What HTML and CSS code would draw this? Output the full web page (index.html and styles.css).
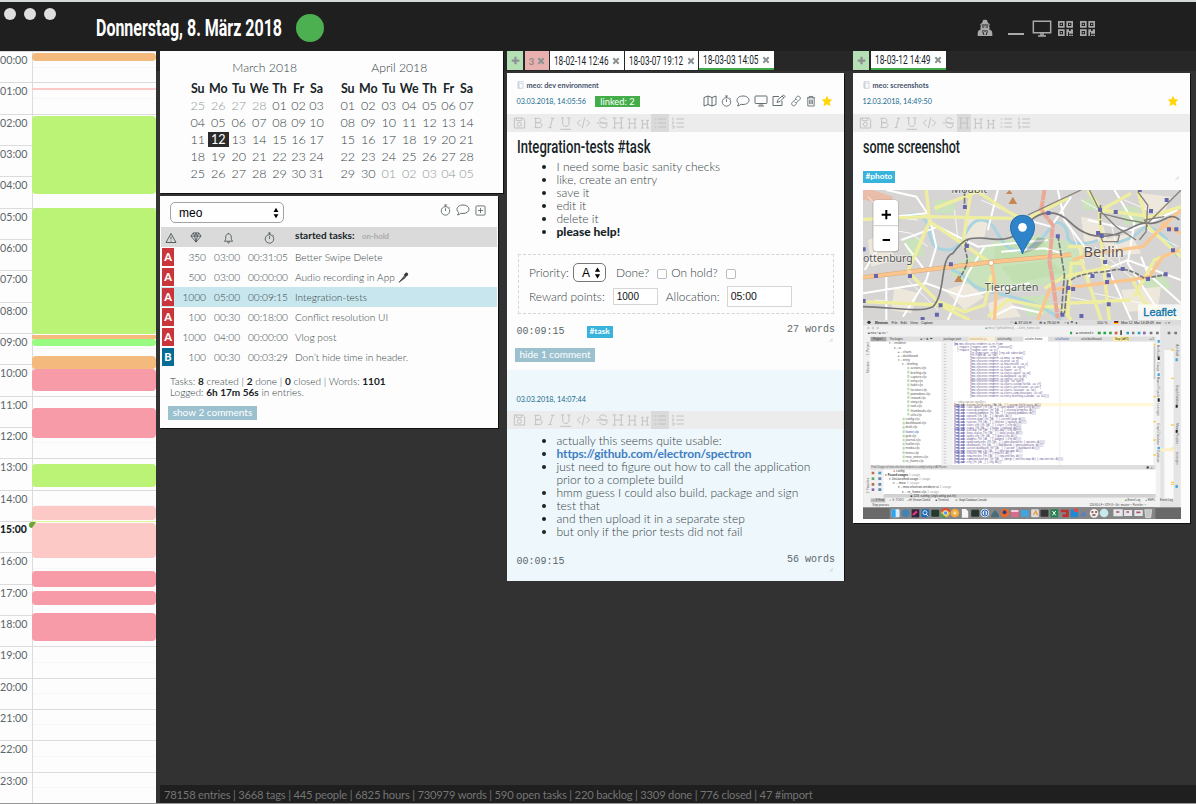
FILE: index.html
```html
<!DOCTYPE html>
<html lang="de">
<head>
<meta charset="utf-8">
<title>meo</title>
<link rel="stylesheet" href="styles.css">
</head>
<body>
<svg class="defs" width="0" height="0">
  <symbol id="stopwatch" viewBox="0 0 24 26"><circle cx="12" cy="15" r="9.3"/><path d="M12 15V9M9 2h6M12 2v4M19 6l2 2"/></symbol>
  <symbol id="comment" viewBox="0 0 28 24"><path d="M14 2c7 0 12 3.800 12 8.500S21 19 14 19c-1.500 0-3-.2-4.300-.5C8 20.500 5.500 21.600 3 22c1.500-1.600 2.200-3.400 2.200-5.200C3.200 15.200 2 13 2 10.500 2 5.800 7 2 14 2z"/></symbol>
  <symbol id="plusbox" viewBox="0 0 24 24"><rect x="2" y="2" width="20" height="20" rx="2"/><path d="M12 6.500v11M6.500 12h11"/></symbol>
  <symbol id="map" viewBox="0 0 28 24"><path d="M2 5l8-3 8 3 8-3v17l-8 3-8-3-8 3zM10 2v17M18 5v17"/></symbol>
  <symbol id="monitor" viewBox="0 0 28 24"><rect x="2" y="2" width="24" height="15" rx="1.500"/><path d="M12 17v4M16 17v4M8 22h12"/></symbol>
  <symbol id="edit" viewBox="0 0 28 26"><path d="M20 14v9H2V5h12M10 17l2-6L23 2l3 3-10 10zM20 4l4 4"/></symbol>
  <symbol id="link" viewBox="0 0 26 26"><path d="M11 8l4-4c2-2 4-2 6 0s2 4 0 6l-5 5c-2 2-4 2-6 0M15 18l-4 4c-2 2-4 2-6 0s-2-4 0-6l5-5c2-2 4-2 6 0"/></symbol>
  <symbol id="trash" viewBox="0 0 22 26"><path d="M2 6h18M7 6V3h8v3M4 6v18h14V6M8 10v10M11 10v10M14 10v10"/></symbol>
  <symbol id="star" viewBox="0 0 24 24"><path d="M12 1l3.300 7.300 7.700.9-5.700 5.300 1.600 8L12 18.600 5.100 22.500l1.600-8L1 9.200l7.700-.9z"/></symbol>
  <symbol id="book" viewBox="0 0 18 22"><path d="M2 2h14v18H2zM5 2v18M8 7h5M2 7h2M2 12h2M2 16h2"/></symbol>
  <symbol id="cross" viewBox="0 0 20 20"><path d="M5 1.500L10 6.500l5-5L18.500 5l-5 5 5 5-3.500 3.500-5-5-5 5L1.500 15l5-5-5-5z"/></symbol>
  <symbol id="plus" viewBox="0 0 20 20"><path d="M7.500 1.500h5v6h6v5h-6v6h-5v-6h-6v-5h6z"/></symbol>
  <symbol id="grip" viewBox="0 0 12 12"><path d="M1 11L11 1M7 11l4-4"/></symbol>
  <symbol id="updown" viewBox="0 0 16 30"><path d="M8 1l6.500 11h-13zM8 29L1.500 18h13z"/></symbol>
  <symbol id="qr" viewBox="0 0 45 45"><path fill-rule="evenodd" d="M0 0h20v20H0zM5 5v10h10V5zM25 0h20v20H25zM30 5v10h10V5zM0 25h20v20H0zM5 30v10h10V30zM8 8h4v4H8zM33 8h4v4h-4zM8 33h4v4H8zM25 25h8v5h5v-5h7v13h-12v-4h-3v11h-5zM33 41h5v4h-5zM40 41h5v4h-5z"/></symbol>
  <symbol id="toolbar" viewBox="0 0 540 54">
    <g fill="none" stroke="#c2c2c2" stroke-width="3">
      <path d="M22 12h26l5 5v25H22zM28 12v8h16v-8"/><circle cx="37" cy="31" r="6"/>
      <path d="M82 13h13c9 0 9 13 0 13h-9 10c12 0 12 15 0 15H82M86 13v28M132 13h10M124 41h10M137 13l-8 28M162 12h9M181 12h9M167 12v15c0 14 19 14 19 0V12M160 46h32"/>
      <path d="M221 17l-10 10 10 10M238 17l10 10-10 10M233 11l-7 32M298 18c-3-9-20-8-20 1 0 10 22 6 22 15 0 10-20 10-22-1M269 27h34M317 12h11M337 12h12M317 42h11M337 42h12M323 12v30M343 12v30M323 27h20M362 15h9M379 15h10M362 42h9M379 42h10M367 15v27M384 15v27M367 28h17M402 19h8M417 19h9M402 42h8M417 42h9M406 19v23M421 19v23M406 30h15"/>
      <path d="M454 15h23M454 27h23M454 39h23M443 15h5M443 27h5M443 39h5M508 15h23M508 27h23M508 39h23M498 11v9M495 25h6l-6 7M496 36h5v6h-5"/>
    </g>
  </symbol>
</svg>

<div class="window">
  <header class="titlebar">
    <div class="lights"><i></i><i></i><i></i></div>
    <svg class="title" width="189" height="36"><text class="cond" x="1" y="24" font-size="23.500" font-weight="700" textLength="186" lengthAdjust="spacingAndGlyphs">Donnerstag, 8. März 2018</text></svg>
    <div class="status"></div>
    <div class="tools">
      <svg class="spy" width="16" height="18" viewBox="0 0 48 54"><path fill="#a9a9a9" d="M10 15l5-3 3-8c1-3 4-2 6-1 2-1 5-2 6 1l3 8 5 3v4l-2 1 2 7-2 4c7 2 10 6 10 13v7H2v-7c0-7 3-11 10-13l-2-4 2-7-2-1z"/><path fill="none" stroke="#1f1f1f" stroke-width="3" d="M14 18h20M15 24h7M26 24h7M19 33l-2 5 4 10M29 33l2 5-4 10M24 33v6"/></svg>
      <div class="minus"></div>
      <svg class="screen" width="20" height="18" viewBox="0 0 60 54"><path fill="none" stroke="#a9a9a9" stroke-width="4.500" d="M4 4h52v34H4zM18 48h24M27 39v8h6v-8"/></svg>
      <svg class="qr" width="15" height="15"><use href="#qr"/></svg>
      <svg class="qr" width="15" height="15"><use href="#qr"/></svg>
    </div>
  </header>

  <div class="main">
    <aside class="day">
      <div class="hours">
        <div><b>00:00</b><i></i></div><div><b>01:00</b><i></i></div><div><b>02:00</b><i></i></div><div><b>03:00</b><i></i></div><div><b>04:00</b><i></i></div><div><b>05:00</b><i></i></div><div><b>06:00</b><i></i></div><div><b>07:00</b><i></i></div><div><b>08:00</b><i></i></div><div><b>09:00</b><i></i></div><div><b>10:00</b><i></i></div><div><b>11:00</b><i></i></div><div><b>12:00</b><i></i></div><div><b>13:00</b><i></i></div><div><b>14:00</b><i></i></div><div class="now"><b>15:00</b><i></i></div><div><b>16:00</b><i></i></div><div><b>17:00</b><i></i></div><div><b>18:00</b><i></i></div><div><b>19:00</b><i></i></div><div><b>20:00</b><i></i></div><div><b>21:00</b><i></i></div><div><b>22:00</b><i></i></div><div><b>23:00</b><i></i></div>
      </div>
      <div class="events">
        <span class="orange" style="top:2px;height:8px"></span>
        <span class="rose thin" style="top:37px;height:2px"></span>
        <span class="lime" style="top:65px;height:78px"></span>
        <span class="lime" style="top:157px;height:125.500px"></span>
        <span class="orange thin" style="top:284px;height:4px"></span>
        <span class="mint" style="top:288px;height:7px"></span>
        <span class="orange" style="top:305px;height:13px"></span>
        <span class="pink" style="top:318px;height:22px"></span>
        <span class="pink" style="top:357px;height:30px"></span>
        <span class="lime" style="top:413px;height:23px"></span>
        <span class="rose" style="top:454.500px;height:14.500px"></span>
        <span class="yellow thin" style="top:469.500px;height:1.500px"></span>
        <span class="rose" style="top:472px;height:35px"></span>
        <span class="pink" style="top:520px;height:16px"></span>
        <span class="pink" style="top:540px;height:14px"></span>
        <span class="pink" style="top:562px;height:28px"></span>
      </div>
      <svg class="nowmark" width="8" height="8"><path d="M7 1H3a3 3 0 0 0 0 6L5 4z" fill="#67a72c"/></svg>
    </aside>

    <section class="left">
      <div class="card months">
        <div class="month"><h4>March 2018</h4>
          <div class="grid"><b>Su</b><b>Mo</b><b>Tu</b><b>We</b><b>Th</b><b>Fr</b><b>Sa</b>
          <i>25</i><i>26</i><i>27</i><i>28</i><span>01</span><span>02</span><span>03</span>
          <span>04</span><span>05</span><span>06</span><span>07</span><span>08</span><span>09</span><span>10</span>
          <span>11</span><span class="today">12</span><span>13</span><span>14</span><span>15</span><span>16</span><span>17</span>
          <span>18</span><span>19</span><span>20</span><span>21</span><span>22</span><span>23</span><span>24</span>
          <span>25</span><span>26</span><span>27</span><span>28</span><span>29</span><span>30</span><span>31</span></div>
        </div>
        <div class="month"><h4>April 2018</h4>
          <div class="grid"><b>Su</b><b>Mo</b><b>Tu</b><b>We</b><b>Th</b><b>Fr</b><b>Sa</b>
          <span>01</span><span>02</span><span>03</span><span>04</span><span>05</span><span>06</span><span>07</span>
          <span>08</span><span>09</span><span>10</span><span>11</span><span>12</span><span>13</span><span>14</span>
          <span>15</span><span>16</span><span>17</span><span>18</span><span>19</span><span>20</span><span>21</span>
          <span>22</span><span>23</span><span>24</span><span>25</span><span>26</span><span>27</span><span>28</span>
          <span>29</span><span>30</span><i>01</i><i>02</i><i>03</i><i>04</i><i>05</i></div>
        </div>
      </div>

      <div class="card tasks">
        <div class="taskbar">
          <div class="select story"><span>meo</span><svg width="6" height="12"><use href="#updown"/></svg></div>
          <div class="line-icons">
            <svg width="11" height="12"><use href="#stopwatch"/></svg>
            <svg width="14" height="12"><use href="#comment"/></svg>
            <svg width="11" height="11"><use href="#plusbox"/></svg>
          </div>
        </div>
        <div class="row head">
          <span><svg width="12" height="12" viewBox="0 0 24 24"><path d="M12 3L22 21H2zM12 9v6M12 17v2"/></svg></span>
          <span><svg width="12" height="11" viewBox="0 0 26 24"><path d="M7 2h12l5 7-11 13L2 9zM2 9h22M7 2l3 7 3 13 3-13 3-7M10 9l3-7 3 7"/></svg></span>
          <span><svg width="11" height="12" viewBox="0 0 22 26"><path d="M2 20c3-3 3-5 3-9 0-5 3-7 6-7s6 2 6 7c0 4 0 6 3 9zM9 21c0 4 4 4 4 0M11 2v2"/></svg></span>
          <span><svg width="11" height="12"><use href="#stopwatch"/></svg></span>
          <strong>started tasks:</strong><em>on-hold</em>
        </div>
        <div class="row"><b>A</b><span>350</span><span>03:00</span><span>00:31:05</span><p>Better Swipe Delete</p></div>
        <div class="row"><b>A</b><span>500</span><span>03:00</span><span>00:00:00</span><p>Audio recording in App <svg width="11" height="11" viewBox="0 0 33 33"><path d="M3 31L18 13l4 4z" fill="#555" stroke="#333" stroke-width="2"/><path d="M17 9l6-7c5-2 9 3 7 8l-8 6z" fill="#3a3a3a"/></svg></p></div>
        <div class="row sel"><b>A</b><span>1000</span><span>05:00</span><span>00:09:15</span><p>Integration-tests</p></div>
        <div class="row"><b>A</b><span>100</span><span>00:30</span><span>00:18:00</span><p>Conflict resolution UI</p></div>
        <div class="row"><b>A</b><span>1000</span><span>04:00</span><span>00:00:00</span><p>Vlog post</p></div>
        <div class="row blue"><b>B</b><span>100</span><span>00:30</span><span>00:03:29</span><p>Don’t hide time in header.</p></div>
        <div class="stats">Tasks: <b>8</b> created | <b>2</b> done | <b>0</b> closed | Words: <b>1101</b><br>Logged: <b>6h 17m 56s</b> in entries.</div>
        <div class="pill show">show 2 comments</div>
      </div>
    </section>

    <section class="mid">
      <nav class="tabs">
        <span class="add"><svg width="9" height="9"><use href="#plus"/></svg></span>
        <span class="closeall">3<svg width="8" height="8"><use href="#cross"/></svg></span>
        <span class="tab"><svg width="55" height="18"><text class="cond" x="0" y="13" font-size="12" textLength="54.500" lengthAdjust="spacingAndGlyphs">18-02-14 12:46</text></svg><svg width="8" height="8"><use href="#cross"/></svg></span>
        <span class="tab narrow"><svg width="55" height="18"><text class="cond" x="0" y="13" font-size="12" textLength="54" lengthAdjust="spacingAndGlyphs">18-03-07 19:12</text></svg><svg width="8" height="8"><use href="#cross"/></svg></span>
        <span class="tab on"><svg width="56" height="17"><text class="cond" x="0" y="13" font-size="12" textLength="55.500" lengthAdjust="spacingAndGlyphs">18-03-03 14:05</text></svg><svg width="8" height="8"><use href="#cross"/></svg></span>
      </nav>
      <article class="card entry">
        <div class="story-name"><svg width="7" height="8"><use href="#book"/></svg>meo: dev environment</div>
        <div class="meta"><time>03.03.2018, 14:05:56</time><span class="linked">linked: 2</span>
          <div class="line-icons">
            <svg width="14" height="12"><use href="#map"/></svg>
            <svg width="11" height="12"><use href="#stopwatch"/></svg>
            <svg width="14" height="12"><use href="#comment"/></svg>
            <svg width="14" height="12"><use href="#monitor"/></svg>
            <svg width="14" height="13"><use href="#edit"/></svg>
            <svg width="12" height="12"><use href="#link"/></svg>
            <svg width="10" height="12"><use href="#trash"/></svg>
            <svg class="star" width="12" height="12"><use href="#star"/></svg>
          </div>
        </div>
        <div class="toolbar list-on"><svg width="180" height="18"><use href="#toolbar"/></svg></div>
        <h2><svg width="140" height="28"><text class="cond" x="0" y="21" font-size="18.500" font-weight="500" textLength="133.500" lengthAdjust="spacingAndGlyphs">Integration-tests #task</text></svg></h2>
        <ul class="one"><li>I need some basic sanity checks</li><li>like, create an entry</li><li>save it</li><li>edit it</li><li>delete it</li><li><b>please help!</b></li></ul>
        <div class="form">
          <div class="frow"><label>Priority:</label><div class="select prio"><span>A</span><svg width="7" height="12"><use href="#updown"/></svg></div><label class="done">Done?</label><i></i><label class="hold">On hold?</label><i></i></div>
          <div class="frow"><label>Reward points:</label><div class="input points">1000</div><label class="alloc">Allocation:</label><div class="input time">05:00</div></div>
        </div>
        <div class="foot"><code>00:09:15</code><span class="tag">#task</span><code class="words">27 words</code><svg class="grip" width="4" height="4"><use href="#grip"/></svg></div>
        <div class="pill hide">hide 1 comment</div>
        <div class="reply">
          <time>03.03.2018, 14:07:44</time>
          <div class="toolbar list-on"><svg width="180" height="18"><use href="#toolbar"/></svg></div>
          <ul class="two"><li>actually this seems quite usable:</li><li><a>https://github.com/electron/spectron</a></li><li>just need to figure out how to call the application<br>prior to a complete build</li><li>hmm guess I could also build, package and sign</li><li>test that</li><li>and then upload it in a separate step</li><li>but only if the prior tests did not fail</li></ul>
          <div class="foot"><code>00:09:15</code><code class="words">56 words</code><svg class="grip" width="4" height="4"><use href="#grip"/></svg></div>
        </div>
      </article>
    </section>

    <section class="right">
      <nav class="tabs">
        <span class="add"><svg width="9" height="9"><use href="#plus"/></svg></span>
        <span class="tab on"><svg width="56" height="17"><text class="cond" x="0" y="13" font-size="12" textLength="55.500" lengthAdjust="spacingAndGlyphs">18-03-12 14:49</text></svg><svg width="8" height="8"><use href="#cross"/></svg></span>
      </nav>
      <article class="card entry photo">
        <div class="story-name"><svg width="7" height="8"><use href="#book"/></svg>meo: screenshots</div>
        <div class="meta"><time>12.03.2018, 14:49:50</time><div class="line-icons"><svg class="star" width="12" height="12"><use href="#star"/></svg></div></div>
        <div class="toolbar h-on"><svg width="180" height="18"><use href="#toolbar"/></svg></div>
        <h2><svg width="140" height="28"><text class="cond" x="0" y="21" font-size="18.500" font-weight="500" textLength="97" lengthAdjust="spacingAndGlyphs">some screenshot</text></svg></h2>
        <div class="tagrow"><span class="tag">#photo</span><svg class="grip" width="4" height="4"><use href="#grip"/></svg></div>
        <div class="media">
        <svg class="mapview" viewBox="25 30 955 390" preserveAspectRatio="none">
          <rect x="25" y="30" width="955" height="390" fill="#d6d5d4"/>
          <g fill="#cbe3bd"><path d="M300 255l120-70 130-20 100 20 30 45-15 65-190 40-130-15-60-40zM240 60h60v40h-60zM680 60l50-10v40h-40zM800 80h50l20 50-60 5zM500 350l80-5 20 50-80 15zM150 180l50-10 10 60-50-5zM860 300l70-15 20 40-60 10z"/></g>
          <g fill="#eee7dc"><path d="M40 180l60-20 20 80-70 20zM680 110l60 10 20 60-70 10zM270 330l70-20 50 40-60 40zM740 180l90-20 30 60-90 10zM400 370l60-20 40 60-90 8zM860 40l90 10-20 50-70-10zM120 320l70 20-20 60-60-10zM330 110l70 10-10 50-60 5zM800 330l120-10-10 70-90 5z"/></g>
          <path fill="#e9bda9" d="M25 30h30l60 20-5 20-85-10z"/>
          <path fill="#b7dca6" d="M420 200l150-20 10 50-160 20zM440 260l150-20 40 40-150 30z" opacity=".5"/>
          <g fill="none" stroke="#a9d3de" stroke-width="9"><path d="M130 120c40-30 80-20 90 20s10 70 60 70 50-90 100-90 50 80 100 90 90-40 110-70 50 0 50 30 70 20 90 10M290 270c50 10 50 50 100 60 70 20 160 30 230 90M970 230c-40-80-90-100-110-80s-40 30-80 40"/></g>
          <g fill="none" stroke="#fff" stroke-width="6"><path d="M25 120l190-20M95 30l90 20 40 60 20 90-30 100-70 110M140 180l110-40 120 60 210-20M25 340l190-30 110 40 200-40M95 290v130M400 150l30-120M390 200l-50 80-60 140M610 30l20 90 60 80 60 40 80 180M700 120l130 30 140-60M700 290l120-50 160 60M480 110l110 30 60-90M780 30l60 100-20 120 110 170M150 190l60 80M440 215l130-10 70 20M860 230l20 50 100 90M30 270l50-80 20-70M415 410l60-30 90 20"/></g>
          <g fill="none" stroke="#fff" stroke-width="3" opacity=".8"><path d="M40 50l60 60 90 10M110 150l60 10 50 40M60 360l100 10M160 300l90 90M680 60l90 50M650 150l40 100M720 200l120 100M810 60l140 60M880 150l90 50M720 340l190 40M860 350l30 60M300 90l10 90M380 60l90 40M640 350l100 20M770 130l30 130"/></g>
          <g fill="none" stroke="#efeea0" stroke-width="10"><path d="M25 118l190-8 260 5M215 30l10 95-70 160M225 125l105 70 80 55M350 30l-25 160M240 85l130-50 90 60 60 30M160 275l90 90 80 30 60-20 20-90M25 365l230 10 90 45M400 410l60-50 100 20 60 0 30 40M520 115l120-60M700 30l40 60 90-50M735 90l10 150 20 180M640 200h40v50h-30l-10 160M570 325l60-35 140-30M680 240l60 180M830 290l40 80 110 50M830 360l-200 10M840 350l60-110 80-30M850 30l30 110 100 90M740 90l150 20 90-30"/></g>
          <g fill="none" stroke="#dba873" stroke-width="13"><path d="M25 292l135-16 250-30 240-22"/></g>
          <g fill="none" stroke="#fbc68d" stroke-width="10"><path d="M25 292l135-16 250-30 240-22M410 250l15 80-5 90M550 420l35-90 240-30 60-10 40-60 50-20M655 240l60-20 150-20 80-80 35-30M920 130l60 30"/></g>
          <path fill="none" stroke="#eba797" stroke-width="12" d="M570 30l-10 60 35 45-10 110 10 60 15 110" stroke-dasharray="30 2"/>
          <g fill="none" stroke="#777" stroke-width="5"><path d="M25 380c80 0 170 20 210 0 40-40 20-150 60-160 30-40 40-50 100-45 60 10 90 0 130-50 30-30 80-40 120 0s80 50 130 40 70-40 110-35 60-40 90-10"/><path d="M310 300c60-80 0-80 30-120M650 300c30-20 60-20 100-25s60-20 120 20l60-10" stroke-dasharray="14 4"/></g>
          <g fill="none" stroke="#858078" stroke-width="4"><path d="M520 105l160-75M705 30l30 60 50 50 60 40M850 35l30 40-5 80-20 25M740 100l80 20 60 10 100-100M735 160l60 5-5 20h-45zM880 140l-10-20 60-10"/></g>
          <g fill="none" stroke="#777" stroke-width="5" stroke-dasharray="18 5"><path d="M610 165l20 120-10 120M640 300l-10 100M330 30v50M738 75v60"/></g>
          <g fill="#6365ad"><path d="M325 75h12v12h-12zM331 192h12v12h-12zM283 247h12v12h-12zM160 282h12v12h-12zM58 282h12v12H58zM252 370h12v12h-12zM241 398h12v12h-12zM25 202h8v12h-8zM25 357h8v12h-8zM198 411h12v9h-12zM576 93h12v12h-12zM604 163h12v12h-12zM731 83h12v12h-12zM778 90h12v12h-12zM725 153h12v12h-12zM736 162h12v12h-12zM746 240h12v12h-12zM708 282h12v12h-12zM757 280h12v12h-12zM752 300h12v12h-12zM799 261h12v12h-12zM875 291h12v12h-12zM635 318h12v12h-12zM650 321h12v12h-12zM757 367h12v12h-12zM675 402h12v12h-12zM618 398h12v12h-12zM884 87h12v12h-12zM931 54h12v12h-12zM938 142h12v12h-12zM960 142h12v12h-12zM950 205h12v12h-12zM928 277h12v12h-12zM850 30h12v6h-12z"/></g>
          <path fill="#c98650" d="M475 50l13 22h-26zM465 30l9 12h-20zM312 286l13 20h-26z"/>
          <circle cx="410" cy="249" r="8" fill="#fff" stroke="#d9ae78" stroke-width="3"/><circle cx="164" cy="276" r="7" fill="#f7d7ae"/>
          <g class="places"><text x="290" y="39" font-size="30" textLength="108" lengthAdjust="spacingAndGlyphs">Moabit</text><text x="25" y="245" font-size="32" textLength="149" lengthAdjust="spacingAndGlyphs">ottenburg</text><text x="391" y="332" font-size="33" textLength="161" lengthAdjust="spacingAndGlyphs">Tiergarten</text><text x="687" y="231" font-size="43" textLength="121" lengthAdjust="spacingAndGlyphs">Berlin</text></g>
          <path d="M505 222l45-50 25 5-30 30z" fill="#666" opacity=".35"/>
          <path d="M504 222c-8-30-36-50-36-80 0-48 72-48 72 0 0 30-28 50-36 80z" fill="#2e83c9" stroke="#1f6ba9" stroke-width="3"/><circle cx="504" cy="142" r="13" fill="#fff"/>
          <rect x="54" y="59" width="79" height="158" rx="12" fill="#000" opacity=".25"/>
          <rect x="56" y="60" width="75" height="154" rx="10" fill="#fff"/><path d="M56 137h75" stroke="#ccc" stroke-width="3"/>
          <path d="M81 104h28M95 90v28M84 180h22" stroke="#000" stroke-width="6"/>
          <rect x="851" y="373" width="129" height="47" fill="#fff" opacity=".75"/><text class="leaflet" x="867" y="408" font-size="33" textLength="98" lengthAdjust="spacingAndGlyphs">Leaflet</text>
        </svg>
        <svg class="ide" viewBox="25 15 955 597" preserveAspectRatio="none">
          <rect x="25" y="15" width="955" height="597" fill="#ececec"/>
          <rect x="25" y="15" width="955" height="17" fill="#dcdcdc"/>
          <g class="menu" font-size="11"><circle cx="43" cy="22" r="5"/><text x="61" y="26" font-weight="700" textLength="39">Electron</text><text x="111" y="26">File</text><text x="138" y="26">Edit</text><text x="166" y="26">View</text><text x="199" y="26" textLength="36">Capture</text><text x="465" y="26">◠ ♟ 87.00 H</text><text x="555" y="26">⊕ ● 78.00 H</text><text x="628" y="26">◔  ♦   ☂  ◂</text><text x="728" y="26">100 %</text><path d="M779 18h13v3h-13z"/><path d="M779 21h13v3h-13z" fill="#d22"/><path d="M779 24h13v3h-13z" fill="#fc0"/><text x="800" y="26" textLength="98">Mon 12. Mar 14:49:49</text><text x="905" y="26">me</text><text x="932" y="26">⌕ ≡</text></g>
          <rect x="28" y="32" width="890" height="550" fill="#f1f1f1"/><rect x="918" y="32" width="60" height="550" fill="#e4e4e4"/>
          <rect x="930" y="105" width="28" height="445" fill="#fafafa"/>
          <g fill="#ccc"><circle cx="41" cy="39" r="4"/><circle cx="55" cy="39" r="4"/><circle cx="69" cy="39" r="4"/></g>
          <text x="392" y="43" font-size="9" fill="#999"><tspan fill="#4a9">■</tspan> meo [~/github/meo] - .../ui/re_frame.cljs</text>
          <g font-size="9" fill="#444"><text x="40" y="58">■ meo › ■ src ›</text><text x="665" y="58">■ unnamed ▾</text></g>
          <g stroke-width="8" fill="none"><path stroke="#27a844" d="M730 54h9M747 54h8M764 54h8M647 54h6"/><path stroke="#d35a40" d="M781 54h8"/><path stroke="#2aa0c8" d="M816 54h8M850 54h8"/><path stroke="#8a62b8" d="M866 54h8"/><path stroke="#777" d="M886 54h8M905 54h8M940 54h8M960 54h8M833 54h7"/><path stroke="#222" stroke-width="4" d="M800 46v14"/></g>
          <rect x="47" y="65" width="857" height="15" fill="#dedede"/><rect x="48" y="66" width="47" height="13" fill="#a5a5a5"/><rect x="342" y="65" width="80" height="15" fill="#f8eeda"/><rect x="507" y="65" width="74" height="15" fill="#fff"/>
          <g font-size="9" fill="#444"><text x="55" y="76">Project</text><text x="105" y="76">Packages</text><text x="195" y="76">⊕ ÷ ✱ ⊢</text><text x="267" y="76">package.json</text><text x="345" y="76" fill="#c7a258">externs/uri.js</text><text x="428" y="76">ui/ui/config</text><text x="511" y="76">ui/ui/re-frame</text><text x="602" y="76" fill="#3f65b5">ui/ui/footer</text><text x="680" y="76">ui/ui/dashboard</text><text x="885" y="76">⇥1</text></g>
          <rect x="776" y="65" width="50" height="13" fill="#ffef98"/><text x="781" y="75" font-size="9" fill="#333" textLength="42">Stop (⌘F2)</text>
          <rect x="47" y="80" width="213" height="370" fill="#fff"/><rect x="260" y="80" width="35" height="370" fill="#f2f2f2"/><rect x="295" y="80" width="602" height="370" fill="#fff"/>
          <path d="M616 80v370" stroke="#e5e5e5" stroke-width="2"/><rect x="295" y="264" width="602" height="10" fill="#fff7d8"/>
          <g class="files" font-size="9.500"><text x="104" y="88">▾ ▫ renderer</text><text x="117" y="101">▾ ▫ ui</text><text x="130" y="113">▸ ▫ charts</text><text x="130" y="126">▸ ▫ dashboard</text><text x="130" y="138">▾ ▫ entry</text><text x="143" y="151">▾ ▫ briefing</text><text x="168" y="163">actions.cljs</text><text x="168" y="176">briefing.cljs</text><text x="168" y="189">capture.cljs</text><text x="168" y="202">entry.cljs</text><text x="168" y="214">habit.cljs</text><text x="168" y="227">location.cljs</text><text x="168" y="239">pomodoro.cljs</text><text x="168" y="252">reward.cljs</text><text x="168" y="264">story.cljs</text><text x="168" y="277">task.cljs</text><text x="168" y="290">thumbnails.cljs</text><text x="168" y="302">utils.cljs</text><text x="153" y="315">config.cljs</text><text x="153" y="328">dashboard.cljs</text><text x="153" y="340">draft.cljs</text><text x="153" y="353" fill="#3653b0">footer.cljs</text><text x="153" y="366">grid.cljs</text><text x="153" y="378">journal.cljs</text><text x="153" y="391">leaflet.cljs</text><text x="153" y="403">media.cljs</text><text x="153" y="416">menu.cljs</text><text x="153" y="429">new_entries.cljs</text><text x="153" y="441">re_frame.cljs</text></g>
          <path d="M161 155v150M147 308v138" stroke="#b5dbb4" stroke-width="6" stroke-dasharray="8 4.600"/>
          <path d="M271 86v360" stroke="#ccc" stroke-width="8" stroke-dasharray="3 5.700"/>
          <g class="code" font-size="8.600">
            <text x="298" y="90"><tspan class="kw">(ns</tspan> meo.electron.renderer.ui.re-frame</text><text x="307" y="98">(:require [reagent.core :refer [reactive]]</text><text x="307" y="107">(:require [reagent.core :as rc]</text>
            <text x="346" y="116">[re-frame.core :refer [reg-sub subscribe]]</text><text x="346" y="124">[re-frame.db :as rdb]</text><text x="346" y="133">[meo.electron.renderer.ui.menu :as menu]</text><text x="346" y="142">[meo.electron.renderer.ui.grid :as g]</text><text x="346" y="151">[meo.electron.renderer.ui.new-entries :as n]</text><text x="346" y="159">[meo.electron.renderer.ui.stats :as stats]</text><text x="346" y="168">[meo.electron.renderer.ui.footer :as f]</text><text x="346" y="176">[meo.electron.renderer.ui.charts.award :as aw]</text><text x="346" y="185">[meo.electron.renderer.ui.dashboard :as db]</text><text x="346" y="194">[meo.electron.renderer.ui.config :as cfg]</text><text x="346" y="202">[meo.electron.renderer.ui.sync :as sync]</text><text x="346" y="211">[meo.electron.renderer.ui.charts.custom-fields :as cf]</text><text x="346" y="219">[meo.electron.renderer.ui.charts.correlation :as corr]</text><text x="346" y="228">[meo.electron.renderer.ui.charts.location :as loc]</text><text x="346" y="237">[meo.electron.renderer.ui.charts.time.durations :as cd]</text><text x="346" y="245">[meo.electron.renderer.ui.entry.briefing.calendar :as cal]))</text>
            <text x="298" y="263" fill="#999">;; Subscription Handlers</text>
            <text x="298" y="272"><tspan class="kw">(reg-sub</tspan> :custom-field-stats (<tspan class="kw">fn</tspan> [db _] (:custom-field-stats db)))</text><text x="298" y="280"><tspan class="kw">(reg-sub</tspan> :last-update (fn [db _] (:last-update (:query-cfg db))))</text><text x="298" y="289"><tspan class="kw">(reg-sub</tspan> :startup-progress (fn [db _] (:startup-progress db)))</text><text x="298" y="298"><tspan class="kw">(reg-sub</tspan> :running-pomodoro (fn [db _] (:running-pomodoro db)))</text><text x="298" y="306"><tspan class="kw">(reg-sub</tspan> :options (fn [db _] (:options db)))</text><text x="298" y="315"><tspan class="kw">(reg-sub</tspan> :current-page (fn [db _] (:current-page db)))</text><text x="298" y="323"><tspan class="kw">(reg-sub</tspan> :stories (fn [db _] (:stories (:options db))))</text><text x="298" y="332"><tspan class="kw">(reg-sub</tspan> :chart-cfg (fn [db _] (:chart (:cfg db))))</text><text x="298" y="341"><tspan class="kw">(reg-sub</tspan> :sagas (fn [db _] (:sagas (:options db))))</text><text x="298" y="349"><tspan class="kw">(reg-sub</tspan> :cal-day (fn [db _] (:cal-day (:cfg db))))</text><text x="298" y="358"><tspan class="kw">(reg-sub</tspan> :busy-status (fn [db _] (:busy-status db)))</text><text x="298" y="367"><tspan class="kw">(reg-sub</tspan> :query-cfg (fn [db _] (:query-cfg db)))</text><text x="298" y="375"><tspan class="kw">(reg-sub</tspan> :widgets (fn [db _] (:widgets (:cfg db))))</text><text x="298" y="384"><tspan class="kw">(reg-sub</tspan> :questionnaires (fn [db _] (:questionnaires (:options db))))</text><text x="298" y="393"><tspan class="kw">(reg-sub</tspan> :dashboards (fn [db _] (:dashboards (:questionnaires db))))</text><text x="298" y="401"><tspan class="kw">(reg-sub</tspan> :active-dashboard (fn [db _] (:active (:dashboard db))))</text><text x="298" y="410"><tspan class="kw">(reg-sub</tspan> :entries-map (fn [db _] (:entries-map db)))</text><text x="298" y="418"><tspan class="kw">(reg-sub</tspan> :results (fn [db _] (:results db)))</text><text x="298" y="427"><tspan class="kw">(reg-sub</tspan> :new-entries (fn [db _] (:new-entries db)))</text><text x="298" y="436"><tspan class="kw">(reg-sub</tspan> :combined-entries (fn [db _] (merge (:entries-map db) (:new-entries db))))</text><text x="298" y="445"><tspan class="kw">(reg-sub</tspan> :cfg (fn [db _] (:cfg db)))</text>
          </g>
          <path d="M897 88h7M897 245h8M897 320h8M897 375h8M897 420h8M950 105h9M950 190h9M950 330h9M950 400h9M950 502h9M950 508h9" stroke="#f2cf55" stroke-width="4"/><rect x="917" y="400" width="43" height="9" fill="#fbf2c7"/>
          <rect x="898" y="92" width="5" height="100" fill="#c9c9c9"/>
          <g fill="#666" font-size="9"><text transform="translate(909 90) rotate(90)">Ant Build</text><text transform="translate(909 142) rotate(90)">Gauge</text><text transform="translate(909 185) rotate(90)">Maven Projects</text><text transform="translate(909 265) rotate(90)">Leiningen</text><text transform="translate(909 325) rotate(90)">Graph Database</text><text transform="translate(909 405) rotate(90)">Database</text><text transform="translate(964 88) rotate(90)">Ant Build</text><text transform="translate(964 210) rotate(90)">Graph Database</text><text transform="translate(964 325) rotate(90)">Maven Projects</text><text transform="translate(964 410) rotate(90)">Leiningen</text><text transform="translate(44 120) rotate(-90)">1: Project</text><text transform="translate(44 175) rotate(-90)">Structure</text><text transform="translate(44 535) rotate(-90)">2: Favorites</text></g>
          <g stroke="#48a9d6" stroke-width="7"><path d="M913 75v8M913 175v8M913 395v8M967 130v9M967 510v9"/></g><path d="M913 125v10M913 250v10M967 270v8M967 345v8" stroke="#222" stroke-width="6"/>
          <rect x="47" y="450" width="857" height="14" fill="#dedede"/><text x="50" y="460" font-size="8" fill="#666" textLength="226">Find Usages of meo.electron.renderer.ui.config/config in All Places</text><text x="875" y="461" font-size="11" fill="#333">✱ ⊥</text>
          <rect x="87" y="464" width="817" height="84" fill="#fff"/><rect x="87" y="537" width="817" height="11" fill="#d1d1d1"/>
          <g stroke-width="8"><path stroke="#bc6e4b" d="M51 474h8M51 508h8"/><path stroke="#4ba2c8" d="M71 474h9"/><path stroke="#54b064" d="M51 491h8"/><path stroke="#8668aa" d="M51 524h8"/><path stroke="#688aa9" d="M71 491h9M71 508h9M71 524h9"/></g>
          <g fill="#333" font-size="9.500"><text x="116" y="471"><tspan fill="#d55">●</tspan> config</text><text x="91" y="482" font-weight="700" textLength="105">▾ Found usages <tspan font-weight="400" fill="#999">1 usage</tspan></text><text x="103" y="495" textLength="124">▾ Unclassified usage <tspan fill="#999">1 usage</tspan></text><text x="116" y="508" textLength="78">▾ ▫ meo <tspan fill="#999">1 usage</tspan></text><text x="130" y="520" textLength="160">▾ ▫ meo.electron.renderer.ui <tspan fill="#999">1 usage</tspan></text><text x="143" y="533" textLength="110">▾ ▫ re_frame.cljs <tspan fill="#999">1 usage</tspan></text><text x="168" y="546" textLength="137">■ 126 :config (cfg/config put-fn)</text></g>
          <rect x="48" y="550" width="44" height="12" fill="#bdbdbd"/><g font-size="8.500" fill="#444"><text x="54" y="559">⌕ 3: Find</text><text x="102" y="559">✓ 6: TODO</text><text x="156" y="559" textLength="71">⎇ 9: Version Control</text><text x="243" y="559">■ Terminal</text><text x="302" y="559" textLength="95">⊀ Graph Database Console</text><text x="812" y="559"><tspan fill="#3a4">■</tspan> Event Log</text><text x="873" y="559"><tspan fill="#28c">●</tspan> REPL</text><text x="917" y="559">Event Log</text><text x="53" y="574">Stop process</text><text x="705" y="574" textLength="170">126:80  LF÷  UTF-8÷  Git: master ÷  Parinfer: ÷</text></g>
          <rect x="25" y="577" width="955" height="35" fill="#696969"/><rect x="105" y="577" width="798" height="35" fill="#858585"/>
          <g class="dock"><rect x="111" y="583" width="24" height="24" rx="4" fill="#d8edf9"/><path d="M111 587c0-3 2-4 4-4h8v24h-8c-3 0-4-2-4-4z" fill="#2ca5ef"/><circle cx="153" cy="595" r="12" fill="#4782ae"/><rect x="171" y="583" width="23" height="24" fill="#31253d"/><path d="M175 600l12-11" stroke="#ec347d" stroke-width="7"/><rect x="200" y="583" width="24" height="24" rx="4" fill="#246bb3"/><circle cx="211" cy="593" r="6" fill="none" stroke="#c9e9ff" stroke-width="3"/><path d="M215 598l6 6" stroke="#fff" stroke-width="3"/><rect x="230" y="584" width="24" height="21" rx="3" fill="#223b2c"/><circle cx="273" cy="594" r="13" fill="#e7bb35"/><path d="M261 590a13 13 0 0 1 24 0" stroke="#df4b37" stroke-width="6" fill="none"/><path d="M261 597a13 13 0 0 0 11 10" stroke="#37a454" stroke-width="5" fill="none"/><circle cx="273" cy="594" r="6" fill="#4b8bed" stroke="#fff" stroke-width="2"/><circle cx="301" cy="594" r="13" fill="#f2a83f"/><circle cx="301" cy="594" r="5" fill="#ffe0a0"/><path d="M322 582h12l7 7v19h-19z" fill="#f6f6f6"/><rect x="350" y="584" width="24" height="21" rx="3" fill="#26332e"/><circle cx="391" cy="594" r="13" fill="#ddebf8"/><circle cx="391" cy="594" r="9" fill="none" stroke="#295dac" stroke-width="3"/><path d="M391 589v11" stroke="#295dac" stroke-width="4"/><path d="M410 607v-8l12-14 11 14v8z" fill="#456c79"/><circle cx="451" cy="594" r="13" fill="#ef6a28"/><circle cx="450" cy="592" r="6" fill="#353b86"/><rect x="470" y="584" width="22" height="22" fill="#dc6a8c"/><path d="M470 588h22" stroke="#fff" stroke-width="4"/><path d="M499 585h23v23l-12-4-9 3z" fill="#42a5df"/><rect x="530" y="583" width="23" height="24" rx="3" fill="#ddd"/><path d="M537 600l7-12 5 13" stroke="#ef9838" stroke-width="4" fill="none"/><rect x="558" y="584" width="24" height="21" rx="3" fill="#353535"/><rect x="588" y="583" width="23" height="24" fill="#258151"/><path d="M594 588l10 13M604 588l-10 13" stroke="#fff" stroke-width="3"/><path d="M619 588h20v14h-15" stroke="#ba322e" stroke-width="8" fill="none"/><rect x="648" y="584" width="23" height="23" rx="3" fill="#2288d1"/><circle cx="665" cy="586" r="6" fill="#ef4444"/><path d="M676 600l12-13 10 13-12 7z" fill="#6080b7"/><circle cx="719" cy="595" r="13" fill="#eee"/><path d="M711 591h6M722 591h6M714 600h9" stroke="#883e3d" stroke-width="4"/><circle cx="749" cy="594" r="13" fill="#c7e8ed"/><path d="M777 583h28v21h-28zM809 585h24v18h-24zM840 585h25v18h-25z" fill="#e6e7eb"/><path d="M785 591h10M816 591h8M846 592h12" stroke="#ad5362" stroke-width="5"/><path d="M871 584h21l-3 24h-15z" fill="#c4c5c5" stroke="#e9e9e9" stroke-width="2"/></g>
        </svg>
        </div>
      </article>
    </section>
    <footer>78158 entries | 3668 tags | 445 people | 6825 hours | 730979 words | 590 open tasks | 220 backlog | 3309 done | 776 closed | 47 #import</footer>
  </div>
</div>
</body>
</html>
```
FILE: styles.css
```css
* { box-sizing: border-box; }
body { margin: 0; width: 1196px; height: 804px; overflow: hidden; background: #323232; color: #354345; font-family: Lato, "Noto Sans", sans-serif; font-weight: 300; }
svg { display: block; flex: none; overflow: visible; }
.defs { position: absolute; }
.window { height: 804px; border-top: 2px solid #d4d8d8; border-bottom: 1px solid #999; display: flex; flex-direction: column; }
.cond { font-family: Roboto, "Liberation Sans", sans-serif; fill: #172427; }

.titlebar { height: 49px; flex: none; background: #1f1f1f; display: flex; }
.lights { display: flex; gap: 8px; padding: 6px 0 0 4px; width: 95px; }
.lights i { width: 12px; height: 12px; border-radius: 50%; background: #dedede; }
.title { margin-top: 10px; }
.title .cond { fill: #fff; }
.status { width: 28px; height: 28px; border-radius: 50%; background: #4caf50; margin: 12px 0 0 12px; }
.tools { flex: 1; display: flex; align-items: flex-start; padding: 17px 0 0 653px; }
.minus { width: 16px; height: 2px; background: #a9a9a9; margin: 14px 8px 0 15px; }
.screen { margin-top: 1px; margin-right: 6px; }
.qr { fill: #a9a9a9; margin: 2px 7px 0 0; }

.main { flex: 1; display: grid; grid-template-columns: 156px 347px 341px 1fr; grid-template-rows: 734px 18px; min-height: 0; background: linear-gradient(#272727 20px, #323232 20px); }
.day { grid-row: 1 / 3; background: #fdfdfd; position: relative; overflow: hidden; }
.hours { display: grid; grid-auto-rows: 31.330px; }
.hours div { display: flex; border-top: 1px solid #dcdcdc; }
.hours b { width: 33px; border-right: 1px solid #dcdcdc; font-weight: 400; font-size: 10.700px; line-height: 13px; padding-top: 1px; color: #59666a; }
.hours i { flex: 1; height: 15.500px; border-bottom: 1px solid #f7f7f7; }
.hours .now b { font-weight: 900; color: #172427; font-size: 10.400px; }
.events span { position: absolute; left: 32px; width: 124px; border-radius: 4px; }
.events .thin { border-radius: 1px; }
.orange { background: #f4b97d; } .lime { background: #baf375; } .mint { background: #98fa80; }
.pink { background: #f79ba8; } .rose { background: #fcc9c6; } .yellow { background: #e2f491; }
.nowmark { position: absolute; left: 29px; top: 470px; }

.card { background: #fdfdfd; box-shadow: 1px 1px 0 #111; }
.left { padding-left: 4px; }
.months { width: 343px; height: 142px; display: flex; gap: 12.500px; padding: 8px 0 0 27.500px; }
.month { width: 137.500px; font-size: 12.600px; }
.month h4 { margin: 0 0 4px; text-align: center; font-weight: 300; font-size: 12.200px; line-height: 17px; padding-left: 17px; }
.month:last-child h4 { padding-left: 0; padding-right: 14px; }
.grid { display: grid; grid-template-columns: repeat(4, 20.500px) 20px 18px 18px; grid-auto-rows: 17px; line-height: 17px; text-align: center; }
.grid > * { font-style: normal; white-space: nowrap; }
.grid b { color: #172427; font-weight: 700; font-size: 12.400px; }
.grid i { color: #8f9899; }
.grid .today { background: #2b2b2b; color: #fff; height: 15px; line-height: 15px; margin-top: 1px; font-weight: 400; }

.tasks { width: 338px; height: 232px; margin-top: 3px; }
.taskbar { height: 31px; display: flex; justify-content: space-between; align-items: flex-start; padding: 6px 12px 0 10px; }
.select { border: 1px solid #a3a3a3; border-radius: 5px; background: #fefefe; display: flex; align-items: center; justify-content: space-between; color: #000; }
.story { width: 114px; height: 21px; padding: 0 4px 0 8px; font: 12px "Liberation Sans", sans-serif; }
.line-icons { display: flex; align-items: center; gap: 5px; fill: none; stroke: #536064; stroke-width: 1.800; }
.line-icons .star { fill: #ffd60a; stroke: none; margin-left: 1px; }
.tasks .line-icons { margin-top: 2px; }
.row { display: grid; grid-template-columns: 12px 32px 34px 48px 1fr; align-items: center; height: 20px; margin: 0 1px; padding-left: 1px; font-size: 10.150px; line-height: 20px; text-align: right; }
.row b { background: #c9353a; color: #fff; height: 18px; line-height: 18px; text-align: center; font-weight: 900; font-size: 11px; }
.row.blue b { background: #066c96; }
.row p { margin: 0 0 0 7px; text-align: left; display: flex; gap: 3px; align-items: center; }
.row.sel { background: #c8e6ed; }
.row.head { grid-template-columns: 18px 31px 35px 46px 63px 1fr; background: #dadada; padding: 0 0 0 1px; }
.head span { display: flex; justify-content: center; fill: none; stroke: #3d484b; stroke-width: 1.700; padding-top: 1px; }
.head strong { text-align: left; color: #172427; font-weight: 700; font-size: 10px; line-height: 17px; padding-left: 3px; align-self: start; white-space: nowrap; }
.head em { font-style: normal; text-align: left; font-weight: 700; font-size: 7.800px; color: #aaa; padding-left: 7px; align-self: start; line-height: 18px; }
.stats { padding: 8.500px 0 0 10px; font-size: 10.050px; line-height: 11px; }
.stats b { font-weight: 700; color: #172427; }
.pill { background: #9bc1cf; color: #fff; font-weight: 400; height: 14px; line-height: 13px; text-align: center; font-size: 10px; white-space: nowrap; }
.show { width: 89px; margin: 8.500px 0 0 8px; }

.mid { padding-left: 4px; }
.right { padding-left: 9px; }
.tabs { height: 22px; display: flex; gap: 1px; align-items: flex-start; }
.tabs > span { height: 19px; display: flex; align-items: center; justify-content: center; fill: #8c9191; }
.tabs .add { width: 16px; background: #b5dfb5; }
.closeall { width: 24px; margin-left: 1px; background: #e9b0b0; gap: 3px; font-size: 10px; font-weight: 700; color: #948889; }
.tab { width: 74px; background: #fff; gap: 3px; }
.tab.narrow { width: 73px; }
.tab .cond { font-weight: 400; }
.tab.on { width: 75px; border-bottom: 2px solid #3faa47; }
.entry { width: 337px; height: 507px; }
.photo { height: 450px; }
.right .tab { margin-left: 1px; }
.story-name { height: 19px; padding: 6px 0 0 9.500px; display: flex; gap: 3px; font-size: 7.250px; font-weight: 700; line-height: 13px; color: #45536d; align-items: flex-start; fill: none; stroke: #a9b3c8; stroke-width: 1.500; }
.story-name svg { margin-top: 2px; }
.meta { height: 22px; display: flex; align-items: center; padding: 0 11px 3px 9.500px; }
.meta .line-icons { margin-left: auto; gap: 4px; margin-top: -2px; }
time { font-size: 7.250px; color: #176b8e; font-weight: 400; white-space: nowrap; }
.linked { width: 45px; height: 11px; line-height: 11px; background: #42ad49; color: #fff; font-weight: 400; font-size: 9.300px; text-align: center; margin-left: 9px; }
.toolbar { height: 18px; background: #ececec; }
.list-on { background: linear-gradient(90deg, transparent 144px, #dadada 144px 162px, transparent 162px), #ececec; }
.h-on { background: linear-gradient(90deg, transparent 104px, #dadada 104px 118px, transparent 118px), #ececec; }
h2 { margin: 0 0 0 9.500px; height: 28px; }
ul { margin: 0; padding: 0 0 0 49.500px; font-size: 12px; line-height: 13px; white-space: nowrap; }
li b { font-weight: 900; color: #172427; }
li::marker { color: #172427; }
li a { color: #407ec2; font-weight: 700; letter-spacing: -0.120px; }
.form { height: 60px; width: 316px; margin: 16px 0 0 11px; border: 1px dashed #d5d5d5; padding: 7px 0 0 10px; font-size: 11.900px; }
.frow { height: 21px; display: flex; align-items: center; }
.prio { width: 33px; height: 19px; margin-left: 4px; padding: 0 4px 0 8px; border-color: #777; font: 12px "Liberation Sans", sans-serif; }
.done { margin-left: 10px; }
.frow i { width: 10px; height: 10px; border: 1px solid #bcbcbc; border-radius: 2px; background: #fff; margin: 2px 4px 0 8px; }
.input { border: 1px solid #d5d5d5; background: #fff; color: #111; font: 10px/1 "Liberation Sans", sans-serif; display: flex; align-items: center; padding-left: 3px; }
.frow + .frow { margin-top: 3px; }
.points { width: 45px; height: 17px; margin: 0 8px; }
.time { width: 65px; height: 21px; margin-left: 7px; font-size: 10.500px; }
.foot { height: 34px; position: relative; display: flex; align-items: flex-start; padding: 12px 9px 0 9.500px; }
code { font: 10px/12px "Liberation Mono", monospace; color: #5c686a; }
.words { margin: -2px 0 0 auto; }
.tag { height: 12px; line-height: 11px; background: #38b4dc; color: #fff; font-weight: 700; font-size: 8.300px; padding: 0 3px; margin-left: 22px; }
.grip { position: absolute; right: 11px; top: 24px; stroke: #aaa; stroke-width: 1.500; }
.hide { width: 80px; margin-left: 8px; }
.reply { background: #eef7fb; margin-top: 8px; height: 211px; padding-top: 21px; }
.reply time { display: block; height: 20px; line-height: 17px; padding-left: 9.500px; }
.two { margin-top: 5px; }
.reply .foot { margin-top: 6px; }
.tagrow { position: relative; height: 23px; }
.tagrow .tag { display: inline-block; margin: 4px 0 0 9.500px; }
.tagrow .grip { top: auto; bottom: 6px; }
.reply .grip { top: auto; bottom: 6px; }
.media { margin: 4px 0 0 10px; width: 318px; }
.photo h2 { height: 31px; }
.mapview { width: 318px; height: 130px; overflow: hidden; }
.places { font-family: "Noto Sans", sans-serif; font-weight: 400; fill: #555; stroke: #fff; stroke-width: 4px; stroke-opacity: .5; paint-order: stroke; }
.leaflet { font-family: "Liberation Sans", sans-serif; font-weight: 400; fill: #0b73aa; stroke: #0b73aa; }
.ide { width: 318px; height: 199px; overflow: hidden; font-family: "Liberation Sans", sans-serif; font-weight: 400; }
.menu { fill: #333; }
.files { fill: #555; }
.code { font-family: "Liberation Mono", monospace; fill: #76689a; letter-spacing: -1.200px; }
.code .kw { fill: #3a3aa0; font-weight: 700; }
footer { grid-column: 2 / 5; margin-left: 4px; background: #1f1f1f; color: #747474; font-size: 11.200px; letter-spacing: -0.200px; line-height: 19px; padding-left: 4px; font-weight: 400; white-space: nowrap; }
```
